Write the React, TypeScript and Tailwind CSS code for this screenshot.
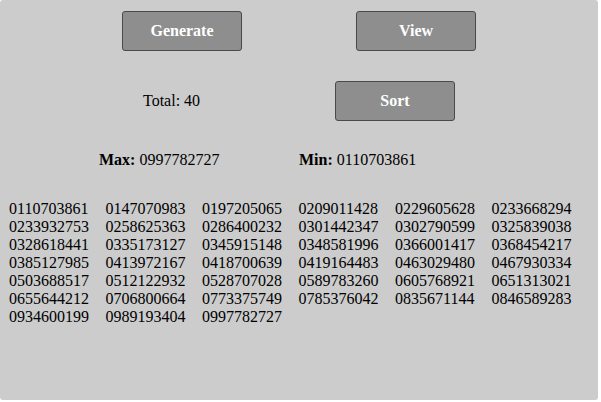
import React from 'react';

const NUMBERS = [
    '0110703861', '0147070983', '0197205065', '0209011428', '0229605628', '0233668294',
    '0233932753', '0258625363', '0286400232', '0301442347', '0302790599', '0325839038',
    '0328618441', '0335173127', '0345915148', '0348581996', '0366001417', '0368454217',
    '0385127985', '0413972167', '0418700639', '0419164483', '0463029480', '0467930334',
    '0503688517', '0512122932', '0528707028', '0589783260', '0605768921', '0651313021',
    '0655644212', '0706800664', '0773375749', '0785376042', '0835671144', '0846589283',
    '0934600199', '0989193404', '0997782727',
];

function Button({ label, className }: { label: string; className?: string }) {
    return (
        <button
            className={`w-[120px] h-[40px] bg-[#8e8e8e] border border-[#4a4a4a] rounded-[3px] text-white font-bold text-[16px] ${className ?? ''}`}
        >
            {label}
        </button>
    );
}

export default function App() {
    return (
        <div className="w-[598px] h-[400px] bg-[#cccccc] rounded-[3px] text-black text-[16px] font-['Liberation_Serif','Times_New_Roman',serif] overflow-hidden">
            {/* top buttons */}
            <div className="flex pt-[11px]">
                <Button label="Generate" className="ml-[122px]" />
                <Button label="View" className="ml-[114px]" />
            </div>

            {/* total + sort */}
            <div className="flex items-center mt-[30px]">
                <div className="ml-[143px] w-[192px]">Total: 40</div>
                <Button label="Sort" />
            </div>

            {/* max / min */}
            <div className="flex mt-[27px]">
                <div className="ml-[99px] w-[200px]">
                    <b>Max:</b> 0997782727
                </div>
                <div>
                    <b>Min:</b> 0110703861
                </div>
            </div>

            {/* list */}
            <div className="grid grid-cols-[repeat(6,96.5px)] pl-[9px] mt-[28px] leading-[18px]">
                {NUMBERS.map((n, i) => (
                    <div key={i}>{n}</div>
                ))}
            </div>
        </div>
    );
}
